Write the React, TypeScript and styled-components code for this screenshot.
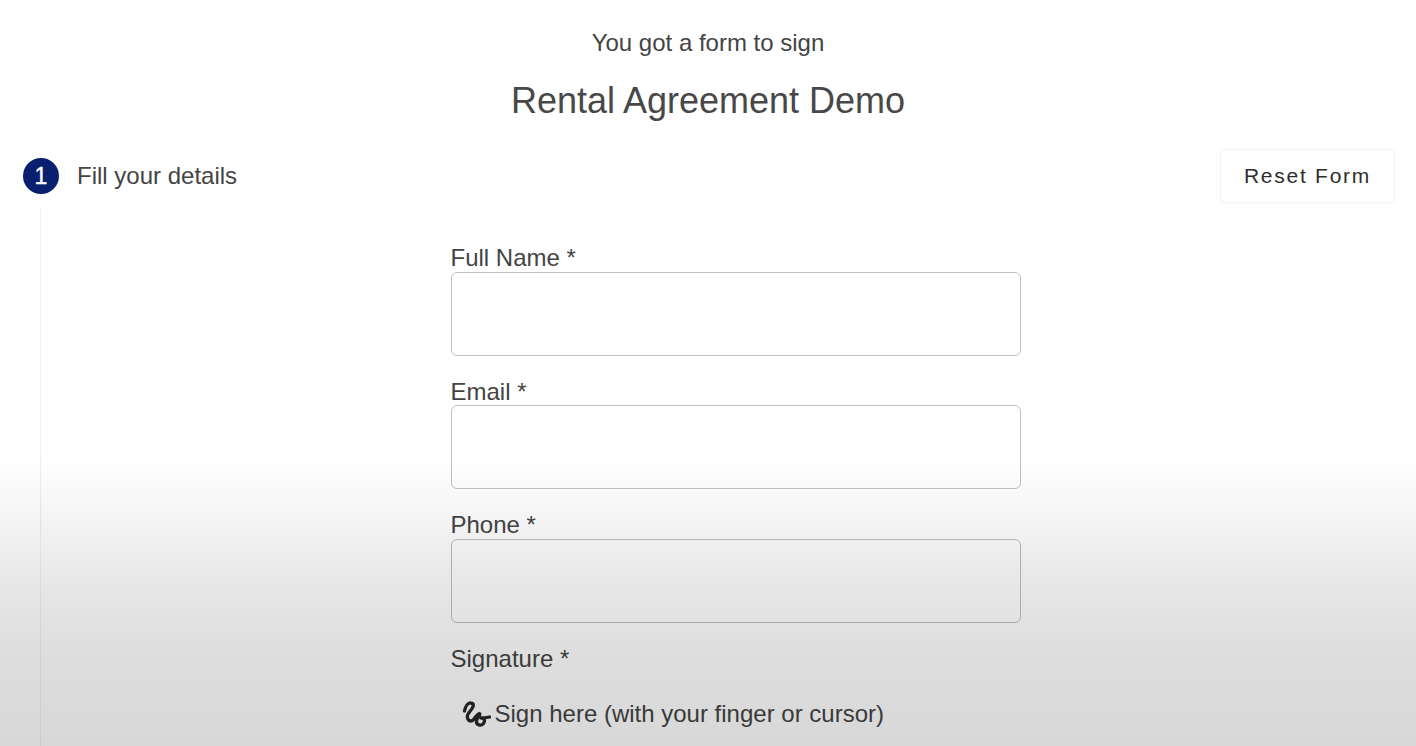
import React from "react";
import styled, {createGlobalStyle} from "styled-components";

const GlobalStyle = createGlobalStyle`
  html, body {
    margin: 0;
    height: 100%;
    background: #fff;
    overflow: hidden;
  }
  body {
    font-family: "Liberation Sans", Arial, sans-serif;
    color: #444;
  }
`;

const Page = styled.div`
  height: 746px;
  overflow: hidden;
  box-sizing: border-box;
  padding-top: 29px;
`;

const Header = styled.header`
  display: flex;
  flex-direction: column;
  align-items: center;
  gap: 24px;
  .sub {
    font-size: 24px;
    line-height: 27px;
  }
  h1 {
    margin: 0;
    font-size: 36px;
    line-height: 41px;
    font-weight: 400;
    color: #484848;
  }
`;

const StepRow = styled.div`
  display: flex;
  align-items: center;
  height: 54px;
  margin-top: 28px;
  padding: 0 21px 0 23px;
`;

const StepBadge = styled.div`
  width: 36px;
  height: 36px;
  border-radius: 50%;
  background: #08206f;
  color: #fff;
  font-size: 23px;
  -webkit-text-stroke: 0.4px #fff;
  display: flex;
  align-items: center;
  justify-content: center;
`;

const StepTitle = styled.div`
  flex: 1;
  margin-left: 18px;
  font-size: 24px;
`;

const ResetButton = styled.button`
  width: 175px;
  height: 54px;
  box-sizing: border-box;
  background: #fff;
  border: 1px solid #f3f3f3;
  border-radius: 4px;
  font-family: inherit;
  font-size: 21px;
  letter-spacing: 1.75px;
  color: #2e2e2e;
  box-shadow: 0 1px 2px rgba(0, 0, 0, 0.03);
`;

const StepBody = styled.div`
  margin: 5px 0 0 40px;
  border-left: 1px solid #efefef;
  height: 600px;
  display: flex;
  justify-content: center;
  padding: 36px 0 0 0;
  box-sizing: border-box;
`;

const Form = styled.form`
  width: 570px;
  margin-left: 14px;
  display: flex;
  flex-direction: column;
`;

const Field = styled.div`
  display: flex;
  flex-direction: column;
  margin-bottom: 22px;
`;

const Label = styled.label`
  font-size: 24px;
  line-height: 28px;
  height: 27.5px;
  color: #444;
`;

const Input = styled.input`
  height: 84px;
  box-sizing: border-box;
  border: 1px solid #c0c0c0;
  border-radius: 6px;
  background: transparent;
  outline: none;
`;

const SignHint = styled.div`
  display: flex;
  align-items: center;
  margin: 27px 0 0 10px;
  height: 30px;
  font-size: 24px;
  color: #444;
  svg {
    width: 30px;
    height: 30px;
    margin-right: 4px;
    flex-shrink: 0;
  }
`;

// grey fade over the lower part of the page
const BottomFade = styled.div`
  position: fixed;
  left: 0;
  right: 0;
  top: 460px;
  height: 286px;
  pointer-events: none;
  background: linear-gradient(180deg, #ffffff 0%, #f7f7f7 15%, #e9e9e9 40%, #dedede 65%, #d8d8d8 100%);
  mix-blend-mode: multiply;
`;

const SquiggleIcon = () => (
  <svg viewBox="0 0 30 30" fill="none" stroke="#262626" strokeWidth="3.3" strokeLinecap="round" strokeLinejoin="round">
    <path d="M3.5 12 C4.5 7 7 3.5 10 4 C13.5 4.5 12.5 8 10 11 C7.5 14 5.5 16 6.5 19 C7.5 22.5 11 23 13 20 C15 17 17 15 18.5 14.5 C20 15 16 19 15.5 22 C15 26 20 27.5 22.5 24.5 C24.5 21.5 23 18.5 20 19 C23 19 26 18.5 28.5 18" />
  </svg>
);

const App = () => {
  return (
    <Page>
      <GlobalStyle />
      <Header>
        <div className="sub">You got a form to sign</div>
        <h1>Rental Agreement Demo</h1>
      </Header>
      <StepRow>
        <StepBadge>1</StepBadge>
        <StepTitle>Fill your details</StepTitle>
        <ResetButton type="button">Reset Form</ResetButton>
      </StepRow>
      <StepBody>
        <Form>
          <Field>
            <Label>Full Name *</Label>
            <Input type="text" />
          </Field>
          <Field>
            <Label>Email *</Label>
            <Input type="text" />
          </Field>
          <Field>
            <Label>Phone *</Label>
            <Input type="text" />
          </Field>
          <Label>Signature *</Label>
          <SignHint>
            <SquiggleIcon />
            Sign here (with your finger or cursor)
          </SignHint>
        </Form>
      </StepBody>
      <BottomFade />
    </Page>
  );
};

export default App;
